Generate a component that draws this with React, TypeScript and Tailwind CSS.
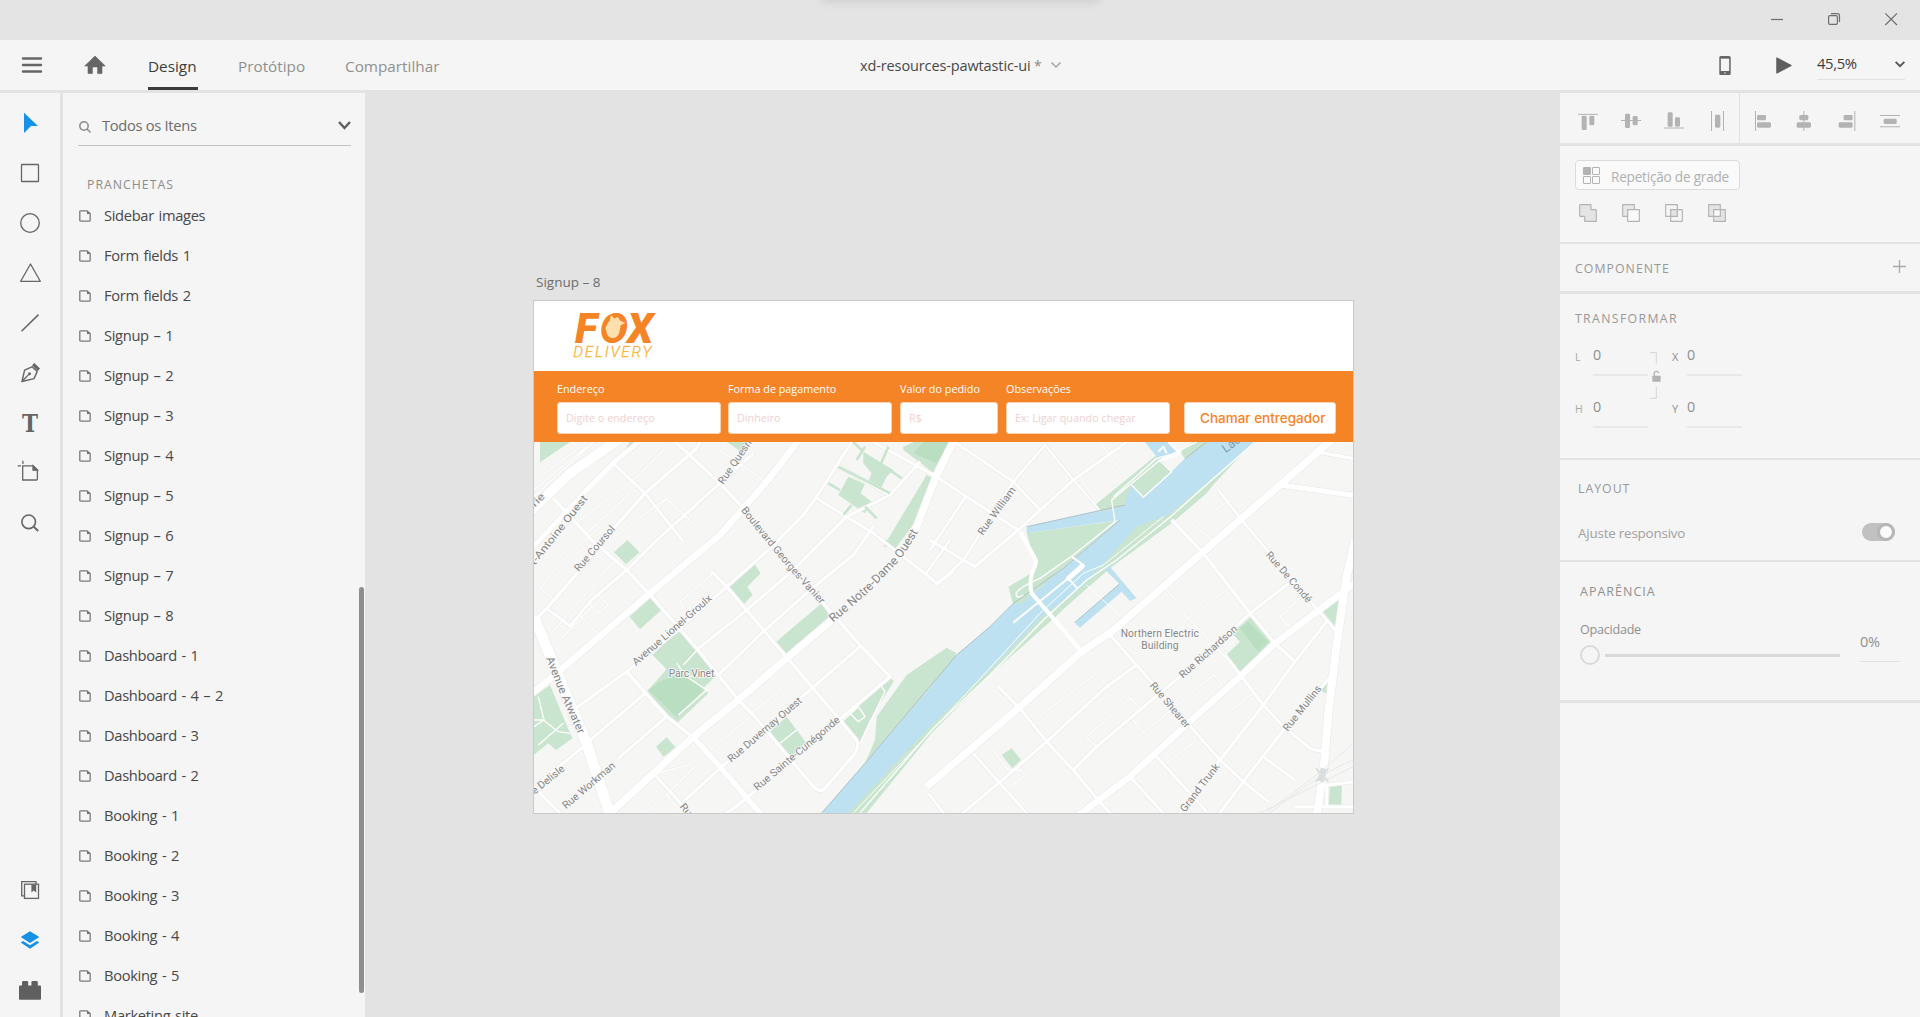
import React from "react";

const UI = "font-['Open_Sans','Noto_Sans',sans-serif]";

/* ---------- small helpers ---------- */

function Tool({ children }: { children: React.ReactNode }) {
  return (
    <svg viewBox="0 0 60 50" className="block h-[50px] w-[60px]" fill="none" stroke="#666" strokeWidth="1.3">
      {children}
    </svg>
  );
}

function Glyph({ children }: { children: React.ReactNode }) {
  return (
    <svg viewBox="0 0 60 60" className="block h-5 w-5" fill="#b3b3b3" stroke="none">
      {children}
    </svg>
  );
}

function PageIcon() {
  return (
    <svg viewBox="0 0 12 12" className="block h-3 w-3 shrink-0" fill="none" stroke="#7a7a7a" strokeWidth="1.3">
      <path d="M1.7 0.8H8.2L11.2 3.8V10.2A1 1 0 0 1 10.2 11.2H1.8A1 1 0 0 1 0.8 10.2V1.7A.9.9 0 0 1 1.7.8Z" />
      <path d="M8 .8V4H11.2Z" fill="#707070" stroke="none" />
    </svg>
  );
}

/* ---------- top bars ---------- */

function TitleBar() {
  return (
    <div className="relative h-10 shrink-0 overflow-hidden bg-[#e4e4e4]">
      <div className="absolute -top-5 left-[824px] h-5 w-[274px] shadow-[0_0_10px_2px_rgba(0,0,0,0.1)]" />
      <svg viewBox="0 0 160 40" className="ml-auto block h-10 w-[160px]" fill="none" stroke="#6e6e6e" strokeWidth="1.2">
        <path d="M11 19.5H23" />
        <rect x="68.6" y="15.6" width="8.8" height="8.8" rx="1.3" />
        <path d="M71 13.6H77.5A2 2 0 0 1 79.5 15.6V22" />
        <path d="M125.3 13.3L137 25M137 13.3L125.3 25" />
      </svg>
    </div>
  );
}

function Header() {
  return (
    <div className="flex h-[50px] shrink-0 bg-[#f5f5f5]">
      <svg viewBox="0 0 148 50" className="h-[50px] w-[148px] shrink-0">
        <path d="M23 18.5H41M23 25H41M23 31.5H41" stroke="#666" strokeWidth="2.4" strokeLinecap="round" />
        <path d="M95 16L105.3 26H102V33.6H97.6V27H92.4V33.6H88V26H84.7Z" fill="#666" stroke="#666" strokeWidth=".6" strokeLinejoin="round" />
      </svg>
      <div className="relative w-[49px] shrink-0 pt-[13px] text-[15.3px] leading-[26px] text-[#3c3c3c]">
        <span className="whitespace-nowrap">Design</span>
        <div className="absolute bottom-0 left-0 h-[3px] w-[50px] bg-[#3c3c3c]" />
      </div>
      <span className="ml-[41px] w-[107px] pt-[13px] text-[15.3px] leading-[26px] text-[#909090]">Protótipo</span>
      <span className="w-[515px] pt-[13px] text-[15.3px] leading-[26px] text-[#909090]">Compartilhar</span>
      <span className="w-[174px] whitespace-nowrap pt-[13px] text-[14.5px] leading-[26px] tracking-[-0.12px] text-[#484848]">xd-resources-pawtastic-ui</span>
      <span className="w-[17px] pt-[13px] text-[14px] leading-[26px] text-[#8a8a8a]">*</span>
      <svg viewBox="0 0 10 6" className="mt-[22px] h-1.5 w-2.5" fill="none" stroke="#ababab" strokeWidth="1.6">
        <path d="M.6.6L5 5L9.4.6" />
      </svg>
      <div className="grow" />
      <svg viewBox="0 0 12 20" className="mr-[45px] mt-[16px] h-[19px] w-3">
        <rect x="0" y="0" width="12" height="20" rx="1.6" fill="#666" />
        <rect x="1.6" y="2.8" width="8.8" height="13" fill="#f5f5f5" />
        <circle cx="6" cy="17.9" r=".8" fill="#f5f5f5" />
      </svg>
      <svg viewBox="0 0 16 17" className="mr-[25px] mt-[17px] h-[17px] w-4">
        <path d="M.8.8L15.4 8.5L.8 16.2Z" fill="#5f5f5f" stroke="#5f5f5f" strokeLinejoin="round" />
      </svg>
      <div className="mr-[15px] flex h-10 w-[88px] justify-between border-b border-[#e1e1e1]">
        <span className="pt-[10px] text-[14.8px] leading-[26px] tracking-[-0.35px] text-[#3c3c3c]">45,5%</span>
        <svg viewBox="0 0 10 7" className="mt-[21px] h-[7px] w-2.5" fill="none" stroke="#555" strokeWidth="1.9">
          <path d="M.6.8L5 5.2L9.4.8" />
        </svg>
      </div>
    </div>
  );
}

/* ---------- left side ---------- */

function Toolbar() {
  return (
    <div className="flex w-[60px] shrink-0 flex-col bg-[#f5f5f5] pb-[2px] pt-[5px]">
      <Tool><path d="M24 14.7L38 28H31L24 35Z" fill="#1592e6" stroke="none" /></Tool>
      <Tool><rect x="21.5" y="16.5" width="17" height="17" rx=".6" /></Tool>
      <Tool><circle cx="30" cy="25" r="9.3" /></Tool>
      <Tool><path d="M30.5 16L40.3 33.3H20.7Z" strokeLinejoin="round" /></Tool>
      <Tool><path d="M21.5 33.2L38.5 16.6" strokeWidth="1.5" /></Tool>
      <Tool>
        <path d="M22 33.5L24.6 22.2L32 18.8L37.2 23.6L34 30.6Z" strokeWidth="1.4" strokeLinejoin="round" />
        <path d="M22.4 33L28.8 26.4" />
        <circle cx="29.5" cy="25.7" r="1.5" fill="#666" stroke="none" />
        <path d="M32 17.2L34.3 15.1L40 20.6L37.8 23Z" fill="#666" stroke="none" />
      </Tool>
      <Tool>
        <text x="22" y="33.7" fontFamily="DejaVu Serif" fontWeight="700" fontSize="23.5" textLength="16" lengthAdjust="spacingAndGlyphs" fill="#666" stroke="none">T</text>
      </Tool>
      <Tool>
        <path d="M22.7 17.8H33.2L37.4 22V31A1 1 0 0 1 36.4 32H22.7Z" />
        <path d="M33 17.8V22.2H37.4Z" fill="#666" />
        <path d="M17.7 17.9H21M22.9 12.7V16" />
      </Tool>
      <Tool>
        <circle cx="28.7" cy="23.8" r="6.8" strokeWidth="1.6" />
        <path d="M33.6 28.6L38.2 33" strokeWidth="2" />
      </Tool>
      <div className="grow" />
      <Tool>
        <path d="M24.3 30.8H21.7V16.6H36V19" />
        <rect x="24.5" y="19.2" width="14" height="14.2" />
        <path d="M31.4 19.4H36.2V27.6L33.8 25.4L31.4 27.6Z" fill="#666" stroke="none" />
      </Tool>
      <Tool>
        <g fill="#1592e6" stroke="none">
          <path d="M30 16.2L39.3 22L30 28L20.7 22Z" />
          <path d="M20.7 27.6L23.2 26L30 30.2L36.8 26L39.3 27.6L30 33.8Z" />
        </g>
      </Tool>
      <Tool>
        <path d="M20 20.6H22V17.2Q22 16 23.2 16H27Q28.2 16 28.2 17.2V20.6H31.4V17.2Q31.4 16 32.6 16H36.6Q37.8 16 37.8 17.2V20.6H40Q41 20.6 41 21.6V33.8Q41 34.8 40 34.8H20Q19 34.8 19 33.8V21.6Q19 20.6 20 20.6Z" fill="#5f5f5f" stroke="none" />
      </Tool>
    </div>
  );
}

const BOARDS = [
  "Sidebar images", "Form fields 1", "Form fields 2", "Signup – 1", "Signup – 2", "Signup – 3", "Signup – 4",
  "Signup – 5", "Signup – 6", "Signup – 7", "Signup – 8", "Dashboard - 1", "Dashboard - 4 – 2", "Dashboard - 3",
  "Dashboard - 2", "Booking - 1", "Booking - 2", "Booking - 3", "Booking - 4", "Booking - 5", "Marketing site",
];

function LayersPanel() {
  return (
    <div className="relative ml-[3px] flex w-[302px] shrink-0 flex-col overflow-hidden bg-[#f5f5f5]">
      <div className="ml-[15px] mt-[14px] flex h-[39px] w-[273px] shrink-0 items-center border-b border-[#c3c3c3]">
        <svg viewBox="0 0 12 12" className="ml-px mt-[1px] h-3 w-3" fill="none" stroke="#8a8a8a" strokeWidth="1.5">
          <circle cx="5" cy="5" r="4.2" />
          <path d="M8 8L11.5 11.5" />
        </svg>
        <span className="ml-[11px] grow pb-[2px] text-[14.7px] leading-6 tracking-[-0.3px] text-[#6c6c6c]">Todos os Itens</span>
        <svg viewBox="0 0 13 9" className="mb-px h-[9px] w-[13px]" fill="none" stroke="#606060" strokeWidth="2.4">
          <path d="M1 1L6.5 7L12 1" />
        </svg>
      </div>
      <div className="ml-6 mt-[29px] shrink-0 text-[12.3px] leading-[20px] tracking-[1px] text-[#8c8c8c]">PRANCHETAS</div>
      <div className="mt-px shrink-0">
        {BOARDS.map((b) => (
          <div key={b} className="flex h-10 items-center pl-4">
            <PageIcon />
            <span className="ml-[13px] pb-[2px] text-[14.7px] leading-6 tracking-[-0.33px] text-[#484848] [word-spacing:1.2px]">{b}</span>
          </div>
        ))}
      </div>
      <div className="absolute left-[296px] top-[494px] h-[406px] w-[5px] rounded-full bg-[#8f8f8f]" />
    </div>
  );
}

/* ---------- artboard ---------- */

function Logo() {
  return (
    <svg viewBox="150 145 270 155" className="ml-9 block h-[51.67px] w-[90px]">
      <defs>
        <linearGradient id="dl" x1="0" y1="1" x2="0" y2="0">
          <stop offset="0" stopColor="#fdc82f" />
          <stop offset="1" stopColor="#f6a13a" />
        </linearGradient>
      </defs>
      <g fontFamily="Roboto" fontStyle="italic">
        <text x="165 239 322" y="246" fontWeight="900" fontSize="126" fill="#f58426">FOX</text>
        <path d="M262 190L270 178L273 163L283 174L293 168L301 180L316 187L302 194L298 215Q294 232 277 233Q262 231 259 212L256 202Z" fill="#fee0b0" />
        <text x="160" y="290" fontSize="46" fontWeight="300" fill="url(#dl)" stroke="#f9b233" strokeWidth=".8" textLength="234">DELIVERY</text>
      </g>
    </svg>
  );
}

function Field({ label, hint, box }: { label: string; hint: string; box: string }) {
  return (
    <div className={box}>
      <div className="h-[21px] whitespace-nowrap text-[10.8px] leading-[15px] text-white">{label}</div>
      <div className="flex h-8 items-center rounded-[3px] border border-[#f7d3b4] bg-white pl-2 text-[10.8px] text-[#efd0d0]">{hint}</div>
    </div>
  );
}

/* Parks and lawns of the street map */
const PARKS = [
  "M60 546H150L60 607Z", "M285 615L330 546H362L350 560Z", "M620 546H695L660 572Z",
  "M1150 560L1180 546H1300L1245 642L1150 570Z",
  "M1030 575L1120 630L1100 650L1080 690L1045 665L1055 640L1030 610Z",
  "M985 650L1035 672L1022 700L1055 725L1035 760L955 705Z",
  "M1220 645L1240 655L1190 780L1130 860H1090Z",
  "M329 1070L390 1015L424 1050L360 1108Z",
  "M398 1185L475 1110L590 1245L550 1285L565 1300L470 1390L380 1295L440 1228Z",
  "M625 980L705 914L722 940L682 980L698 1005L672 1032Z",
  "M765 1148L905 1030L930 1070L800 1185Z",
  "M42 1310L90 1275L150 1420L158 1435L108 1470L85 1450L42 1484Z",
  "M408 1460L440 1432L467 1462L430 1490Z", "M750 1415L800 1370L860 1450L810 1490Z",
  "M960 1380L1110 1255L1122 1262L1050 1380L1015 1455Z",
  "M1035 1510L1065 1440L1070 1370L1160 1245L1280 1163L1310 1180L1290 1215Z",
  "M2113 1190L2160 1145L2135 1120L2195 1068L2260 1145L2158 1237Z",
  "M2405 1050L2465 1000L2450 1105Z", "M2400 1290L2432 1245L2425 1305Z", "M2430 1580L2466 1577L2464 1635L2426 1635Z",
  "M1090 840H1140L1125 868L1098 850Z",
];

const CANAL_PARKS = [
  "M1728 733L1910 585L1955 635L1870 712L1835 675L1810 740L1745 755Z",
  "M1980 575L2020 546H2066L1995 596Z",
  "M1520 820L1735 790L1795 782L1500 1035L1475 1005L1550 920Z",
  "M1465 980L1550 930L1600 925L1520 1010L1480 1035Z",
];

const ROADS: [number, string][] = [
  [30, "M30 755L150 640L300 535"],
  [14, "M40 860L200 690L290 600L370 535"],
  [20, "M30 1305L110 1240L390 1000L600 825L740 665L840 535"],
  [22, "M275 1655L520 1430L655 1320L800 1195L930 1085L1050 980L1130 900L1190 800L1250 645L1305 535"],
  [32, "M42 1070L110 1235L200 1450L272 1670"],
  [10, "M100 715L215 840L320 930L400 1015L530 1165L655 1320L700 1365L880 1580Q900 1600 915 1585L1005 1480Q1018 1460 1010 1440L880 1285L730 1110L620 980L575 935"],
  [9, "M285 615L375 700L490 845"],
  [10, "M465 545L600 670L665 740L910 1030L1020 1155L1110 1250L680 1615L620 1660"],
  [11, "M320 1235L440 1370L520 1432"], [17, "M520 1432L600 1520L725 1665"],
  [9, "M150 1357L320 1235L480 1105L745 870L850 765L890 710L960 600L1000 540"],
  [9, "M205 1445L375 1300"], [9, "M535 1165L675 1055L820 930L980 770L1110 705L1200 605"],
  [9, "M295 1495L440 1370"], [9, "M595 1245L730 1115L870 990L1000 885L1060 800"],
  [9, "M490 1625L600 1525L870 1290L1020 1160"],
  [9, "M50 1575L190 1460"], [9, "M55 1595L130 1670"], [9, "M400 1540L510 1660"],
  [10, "M45 1080L85 1040L180 930L250 840L375 700L530 565L545 535"],
  [9, "M80 1045L150 1098L215 1020L320 930L400 850L560 705L600 670L700 580"],
  [9, "M890 715L1060 820L1220 945L1250 970L1300 935"],
  [9, "M950 615L1110 705"], [9, "M1060 546L1250 650L1340 710L1495 810"],
  [8, "M1310 550L1480 665L1560 750"], [8, "M1575 555L1480 665L1330 900L1250 975"],
  [9, "M1820 546L1660 660L1495 810L1365 920L1330 900L1230 840"],
  [8, "M1215 945L1290 840"], [8, "M1340 705L1230 870"], [7, "M1575 555L1665 665L1740 750"],
  [22, "M1220 1580L1500 1340L1685 1175L1775 1115L2050 875L2280 675L2440 535"],
  [20, "M1670 1670L1830 1550L2020 1375L2155 1255L2265 1150L2510 965"],
  [15, "M2280 675L2510 707"], [10, "M2385 575L2510 597"],
  [9, "M1435 1280L1500 1345L1580 1445L1660 1530L1730 1615L1780 1670"],
  [8, "M1360 1480L1435 1565L1525 1665"], [9, "M1770 1125L1850 1215L2020 1410L2100 1500L2170 1565L2245 1625"],
  [10, "M1955 780L2050 880L2190 1060L2260 1145L2325 1205"],
  [8, "M2095 690L2165 780L2380 1035L2450 1115"],
  [9, "M2115 1185L2230 1335L2290 1400L2370 1465L2405 1475"],
  [9, "M1910 1490L2060 1655"], [9, "M1830 1550L1935 1665"], [8, "M1225 1600L1275 1665"],
  [9, "M1315 1670L1435 1570L1580 1445L1760 1280L1850 1215"],
  [9, "M1660 1530L1730 1460L1860 1350L1980 1250L2190 1060L2320 960"],
  [9, "M2420 1085L2325 1205L2230 1335L2100 1500L1970 1670"],
  [9, "M2095 1665L2170 1565L2290 1410L2445 1235"],
  [9, "M2230 1490L2325 1560"], [9, "M2325 1640H2510"], [9, "M2420 1640V1575L2510 1565"],
  [24, "M2390 1670L2412 1515L2425 1360L2448 1170L2478 960L2505 840"],
];

const LANES = [
  "M42 690L200 560M42 710L220 546M60 650L180 560", "M100 840L340 660L440 560", "M240 860L440 715L530 800M400 760L440 715",
  "M200 820L330 700M600 570L735 665", "M60 985L130 900L240 800M60 985L95 1015M85 1130L250 940L320 870",
  "M205 1030L235 1060L265 1035L235 1005ZM125 1135L215 1040M180 1065L235 1125",
  "M480 1025L580 940M480 1025L495 1060M750 1245L780 1290L695 1360", "M570 1470L690 1370M410 1540L520 1510M440 1605L530 1515M380 1655L440 1605L480 1655",
  "M1545 1380L1730 1240L1770 1285M1700 1430L1830 1315L1865 1350M1730 1460L1700 1430M1840 1380L1870 1420L2080 1245L2110 1275",
  "M1400 1445L1465 1530L1505 1530L1515 1545L1475 1578", "M1940 1510L2030 1440M2115 1365L2200 1300M2280 1070L2350 1005M2280 1070L2310 1100",
  "M2010 1070L2125 985M1990 1060L2115 1190M1930 980L1985 1040", "M1610 546L1735 735M1740 546L1840 680",
  "M2085 750L2130 720M2015 790L2090 850",
];

const LABEL: React.CSSProperties = { paintOrder: "stroke" };

function Street({ x, y, x2, y2, children }: { x: number; y: number; x2: number; y2: number; children: string }) {
  const len = Math.hypot(x2 - x, y2 - y);
  const deg = (Math.atan2(y2 - y, x2 - x) * 180) / Math.PI;
  return (
    <text transform={`translate(${x} ${y}) rotate(${deg})`} textLength={len} lengthAdjust="spacingAndGlyphs" style={LABEL}>
      {children}
    </text>
  );
}

function CityMap() {
  return (
    <svg viewBox="42 546 2457 1113" className="block h-[371px] w-[819px]">
      <rect x="42" y="546" width="2457" height="1113" fill="#f6f6f5" />
      <g fill="#cae5cf">
        {PARKS.map((d) => <path key={d} d={d} />)}
        <path d="M2200 546L2082 672L2060 700L1960 785L1770 925L1650 1030L1590 1085L1410 1245L1235 1420L1040 1659H980L1235 1380L1500 1130L1700 900L1850 780L2060 660L2180 546Z" />
      </g>
      <path d="M1180 580L1210 546H1290L1250 610Z" fill="#b9dec2" />
      <path d="M385 1290Q480 1210 550 1290L470 1370Z" fill="#b9dec2" />
      <path d="M2160 1105L2185 1085L2245 1145L2215 1175Z" fill="#b9dec2" />
      <g fill="none" strokeLinejoin="round" stroke="#ebebea">
        {ROADS.map(([w, d]) => <path key={d} d={d} strokeWidth={w + 4} />)}
        {LANES.map((d) => <path key={d} d={d} strokeWidth="6" />)}
      </g>
      <g fill="none" strokeLinejoin="round" stroke="#fff">
        {LANES.map((d) => <path key={d} d={d} strokeWidth="4" />)}
        {ROADS.map(([w, d]) => <path key={d} d={d} strokeWidth={w} />)}
      </g>
      <path d="M1445 1485L1475 1465L1503 1499L1477 1525Z" fill="#cae5cf" />
      <path d="M282 877L322 840L358 877L318 913Z" fill="#cae5cf" />

      {/* Lachine canal and its basins */}
      <path d="M2060 546L1995 595L1955 635L1870 710L1835 675L1775 720L1815 735L1520 800V820L1730 790L1800 780L1630 925L1510 1020L1480 1030L1410 1100L1310 1185L1230 1285L1035 1510L905 1659H985L1235 1395L1410 1230L1570 1065L1680 985L1770 890L1850 800L1945 765L2070 660L2210 546Z" fill="#bee1f1" />
      <path d="M1875 546H1945L1985 580L1920 603Z" fill="#bee1f1" />
      <path d="M1765 915L1850 1015L1830 1023L1805 995L1680 1103L1664 1088L1798 972L1748 922Z" fill="#bee1f1" />
      <g fill="#cae5cf">{CANAL_PARKS.map((d) => <path key={d} d={d} />)}</g>
      <path d="M1995 596L2060 546M1520 800L1815 735M1800 780L1630 925L1480 1030L1410 1100L1310 1185L1035 1510L905 1659M1664 1088L1798 972" fill="none" stroke="#a5b9c0" strokeWidth="2.5" />
      <g fill="none" stroke="#fff" strokeWidth="4" strokeLinejoin="round">
        <path d="M1020 1659L1240 1405L1410 1245L1570 1080L1700 960L1790 900L1950 772L2075 660L2205 546" />
        <path d="M1000 1659L1235 1412L1400 1235L1560 1060L1690 940L1750 915L1930 770" strokeWidth="3" />
        <path d="M1510 1005Q1490 1020 1488 1000Q1500 980 1560 955L1660 885L1785 785L1775 720L1920 600L2030 546" />
        <path d="M1780 710L1910 595L1985 575M1920 603L1955 635L1870 712L1835 675" />
        <path d="M1690 915L1655 890M1645 955L1480 1088M1645 955L1672 985M1940 580L1930 560L1915 575" strokeWidth="6" />
        <path d="M1645 955L1687 918" strokeWidth="15" strokeLinecap="round" />
        <path d="M1945 546L1980 580L1915 603" strokeWidth="7" />
        <path d="M1500 815L1545 895Q1552 905 1542 925Q1525 960 1535 1000L1600 1075L1685 1175" strokeWidth="12" />
        <path d="M1700 975L1800 1067" strokeWidth="3" />
        <path d="M470 1210L500 1250L560 1290L475 1365M490 1215L530 1172M500 1250L590 1240M42 1380L70 1380L115 1415L150 1420M55 1310L72 1380L42 1400" />
        <path d="M1085 1280L1095 1295L1020 1450M960 1390L1015 1340L1035 1370L1015 1385L990 1360M780 1450L830 1410M55 1455L130 1390" />
        <path d="M955 620L1110 700M1010 600L1035 560M1000 546L1030 575M1070 640L1105 560M1110 630L1145 655M970 765L995 735M1035 740L1070 775M925 670L960 690" stroke="#cae5cf" strokeWidth="8" />
      </g>
      <g fill="none" stroke="#e3e7e7" strokeWidth="2.5">
        <path d="M2240 1655Q2380 1560 2499 1450M2250 1659Q2400 1540 2499 1500M2220 1659Q2400 1570 2499 1520" />
        <path d="M2412 1525L2402 1565" stroke="#d9dfdf" strokeWidth="20" />
        <path d="M2388 1525L2425 1565M2425 1525L2388 1565" stroke="#d9dfdf" strokeWidth="6" />
      </g>

      <defs>
        <path id="vanier" d="M662 751L740 848L800 920L902 1034L960 1100" />
        <path id="dame" d="M940 1088L1050 993L1130 910Q1160 880 1240 735" />
        <path id="atwater" d="M78 1195L120 1300L178 1430L200 1480" />
      </defs>
      <g fontFamily="Roboto" fontSize="31" fill="#858585" stroke="#fafafa" strokeWidth="5" strokeLinejoin="round">
        <text style={LABEL}><textPath href="#vanier" textLength="370" lengthAdjust="spacingAndGlyphs">Boulevard Georges-Vanier</textPath></text>
        <text style={LABEL} fontSize="36"><textPath href="#dame" textLength="375" lengthAdjust="spacingAndGlyphs">Rue Notre-Dame Ouest</textPath></text>
        <text style={LABEL} fontSize="33"><textPath href="#atwater" textLength="248" lengthAdjust="spacingAndGlyphs">Avenue Atwater</textPath></text>
        <Street x={610} y={675} x2={696} y2={548}>Rue Quesn</Street>
        <Street x={45} y={742} x2={76} y2={712}>rie</Street>
        <Street x={44} y={917} x2={204} y2={716}>t-Antoine Ouest</Street>
        <Street x={176} y={937} x2={287} y2={808}>Rue Coursol</Street>
        <Street x={348} y={1218} x2={578} y2={1018}>Avenue Lionel-Groulx</Street>
        <Street x={634} y={1508} x2={848} y2={1325}>Rue Duvernay Ouest</Street>
        <Street x={712} y={1593} x2={962} y2={1383}>Rue Sainte-Cunégonde</Street>
        <Street x={138} y={1648} x2={288} y2={1520}>Rue Workman</Street>
        <Street x={44} y={1604} x2={136} y2={1530}>e Delisle</Street>
        <Street x={478} y={1640} x2={502} y2={1670}>Ru</Street>
        <Street x={1388} y={828} x2={1488} y2={690}>Rue William</Street>
        <g fill="#7e9cab" stroke="#bee1f1" fontSize="36"><Street x={2117} y={580} x2={2180} y2={532}>Lach</Street></g>
        <Street x={2236} y={886} x2={2362} y2={1030}>Rue De Condé</Street>
        <Street x={1989} y={1256} x2={2154} y2={1110}>Rue Richardson</Street>
        <Street x={1888} y={1277} x2={1997} y2={1406}>Rue Shearer</Street>
        <Street x={2303} y={1416} x2={2406} y2={1286}>Rue Mullins</Street>
        <Street x={1995} y={1658} x2={2100} y2={1520}>Grand Trunk</Street>
        <text x="446" y="1251" textLength="137" style={LABEL}>Parc Vinet</text>
        <text x="1802" y="1132" textLength="235" style={LABEL}>Northern Electric</text>
        <text x="1864" y="1167" textLength="112" style={LABEL}>Building</text>
      </g>
    </svg>
  );
}

function Canvas() {
  return (
    <div className="flex grow flex-col items-start pl-[168px] pt-[178px]">
      <div className="ml-[3px] h-[29px] text-[13.5px] leading-[22px] text-[#6c6c6c]">Signup – 8</div>
      <div className="w-[821px] border border-[#c9c9c9] bg-white">
        <div className="h-[70px] pt-2"><Logo /></div>
        <div className="flex h-[71px] bg-[#f58426] pl-[23px] pt-[10px]">
          <Field label="Endereço" hint="Digite o endereço" box="w-[164px]" />
          <Field label="Forma de pagamento" hint="Dinheiro" box="ml-[7px] w-[164px]" />
          <Field label="Valor do pedido" hint="R$" box="ml-2 w-[98px]" />
          <Field label="Observações" hint="Ex: Ligar quando chegar" box="ml-2 w-[164px]" />
          <div className="ml-[14px] mt-[21px] flex h-8 w-[152px] items-center whitespace-nowrap rounded-[3px] border border-[#f7d3b4] bg-white pl-[15px] font-['Inter',sans-serif] text-[13.5px] font-medium text-[#f58426]">
            Chamar entregador
          </div>
        </div>
        <CityMap />
      </div>
    </div>
  );
}

/* ---------- right side ---------- */

function AlignRow() {
  return (
    <div className="flex h-[50px] bg-[#f5f5f5]">
      <div className="flex w-[180px] items-start border-r border-[#e1e1e1] pl-[18px] pt-[18px]">
        <div className="w-[43px]"><Glyph><path d="M0 8.5H60V11.5H0Z" /><rect x="11" y="14" width="15" height="43" rx="4" /><rect x="34" y="14" width="15" height="29" rx="4" /></Glyph></div>
        <div className="w-[43px]"><Glyph><path d="M0 27H60V30H0Z" /><rect x="12" y="8" width="15" height="43" rx="4" /><rect x="35" y="15" width="15" height="28" rx="4" /></Glyph></div>
        <div className="w-[43px]"><Glyph><path d="M0 49.5H60V52.5H0Z" /><rect x="11" y="4" width="15" height="43" rx="4" /><rect x="33" y="19" width="15" height="28" rx="4" /></Glyph></div>
        <Glyph><path d="M12 0H15V60H12ZM48 0H51V60H48Z" /><rect x="24" y="11" width="16" height="39" rx="4" /></Glyph>
      </div>
      <div className="flex items-start pl-[13px] pt-[18px]">
        <div className="w-[41px]"><Glyph><path d="M6 0H9V60H6Z" /><rect x="12" y="12" width="27" height="16" rx="4" /><rect x="12" y="34" width="42" height="16" rx="4" /></Glyph></div>
        <div className="w-[43px]"><Glyph><path d="M28 0H31V60H28Z" /><rect x="16" y="12" width="27" height="16" rx="4" /><rect x="8" y="34" width="43" height="16" rx="4" /></Glyph></div>
        <div className="w-[43px]"><Glyph><path d="M52 0H55V60H52Z" /><rect x="20" y="12" width="27" height="16" rx="4" /><rect x="5" y="34" width="42" height="16" rx="4" /></Glyph></div>
        <Glyph><path d="M0 12H60V15H0ZM0 46H60V49H0Z" /><rect x="11" y="23" width="39" height="16" rx="4" /></Glyph>
      </div>
    </div>
  );
}

function Bool({ children }: { children: React.ReactNode }) {
  return (
    <svg viewBox="0 0 54 54" className="mr-[25px] h-[18px] w-[18px]" fill="none" stroke="#b3b3b3" strokeWidth="3.4" strokeLinejoin="round">
      {children}
    </svg>
  );
}

function Num({ name, lead }: { name: string; lead: string }) {
  return (
    <div className="flex h-[52px]">
      <span className={lead}>{name}</span>
      <div className="h-[29px] w-[55px] border-b-2 border-[#e8e8e8] text-[14.3px] leading-[16px] text-[#8f8f8f]">
        <span>0</span>
      </div>
    </div>
  );
}

function Inspector() {
  const head = "text-[12.3px] leading-[20px] text-[#989898]";
  return (
    <div className="flex w-[360px] shrink-0 flex-col bg-[#e3e3e3]">
      <AlignRow />
      <div className="mt-[3px] h-24 bg-[#f5f5f5] pl-[15px] pt-[14px]">
        <div className="flex h-[30px] w-[165px] items-center rounded-[4px] border border-[#dcdcdc] bg-[#fafafa] pl-[7px]">
          <svg viewBox="0 0 51 51" className="h-[17px] w-[17px]" fill="none" stroke="#b3b3b3" strokeWidth="3">
            <rect x="1.5" y="1.5" width="21" height="21" fill="#b3b3b3" rx="1" />
            <rect x="28.5" y="1.5" width="21" height="21" rx="1" />
            <rect x="1.5" y="28.5" width="21" height="21" rx="1" />
            <rect x="28.5" y="28.5" width="21" height="21" rx="1" />
          </svg>
          <span className="ml-[11px] whitespace-nowrap pt-[3px] text-[13.6px] leading-5 tracking-[-0.22px] text-[#b0b0b0]">Repetição de grade</span>
        </div>
        <div className="ml-1 mt-[14px] flex">
          <Bool><path d="M4 2H36V17H50Q52 17 52 19V52H17V37H4Q2 37 2 35V4Q2 2 4 2Z" fill="#e4e4e4" /></Bool>
          <Bool><path d="M2 2H37V17H17V37H2Z" fill="#e8e8e8" /><path d="M17 17H52V52H17Z" fill="#f9f9f9" /></Bool>
          <Bool><path d="M2 2H37V37H2ZM17 17H52V52H17Z" /><path d="M17 17H37V37H17Z" fill="#e4e4e4" /></Bool>
          <Bool><path d="M2 2H37V37H2ZM17 17H52V52H17Z" fill="#e4e4e4" /><path d="M17 17H37V37H17Z" fill="#f9f9f9" /></Bool>
        </div>
      </div>
      <div className="mt-[2px] flex h-[47px] justify-between bg-[#f5f5f5] pl-[15px] pr-[14px]">
        <span className={`${head} pt-[15px] tracking-[1.05px]`}>COMPONENTE</span>
        <svg viewBox="0 0 13 13" className="mt-4 h-[13px] w-[13px]" stroke="#aaa" strokeWidth="1.3"><path d="M6.5 0V13M0 6.5H13" /></svg>
      </div>
      <div className="mt-[3px] h-[164px] bg-[#f5f5f5] pl-[15px] pt-[15px]">
        <div className={`${head} tracking-[1.35px]`}>TRANSFORMAR</div>
        <div className="mt-[18px] flex">
          <div>
            <Num name="L" lead="w-[18px] text-[10.5px] leading-[20px] text-[#a8a8a8]" />
            <Num name="H" lead="w-[18px] text-[10.5px] leading-[20px] text-[#a8a8a8]" />
          </div>
          <svg viewBox="0 0 36 150" className="ml-0.5 mt-1 h-[50px] w-3" fill="none" stroke="#d6d6d6" strokeWidth="3">
            <path d="M0 5H19V38M0 142H19V108" />
            <rect x="7" y="74" width="25" height="18" rx="2" fill="#b3b3b3" stroke="none" />
            <path d="M13 76V66Q13 61 19 61Q25 61 26 66" stroke="#b3b3b3" strokeWidth="4" />
          </svg>
          <div className="ml-[10px]">
            <Num name="X" lead="w-[15px] text-[11px] leading-[20px] text-[#8f8f8f]" />
            <Num name="Y" lead="w-[15px] text-[11px] leading-[20px] text-[#8f8f8f]" />
          </div>
        </div>
      </div>
      <div className="mt-[2px] h-[100px] bg-[#f5f5f5] pl-[18px] pr-[25px] pt-[19px]">
        <div className={`${head} tracking-[1px]`}>LAYOUT</div>
        <div className="mt-[23px] flex items-center justify-between">
          <span className="text-[13.4px] leading-[22px] tracking-[-0.2px] text-[#a0a0a0]">Ajuste responsivo</span>
          <div className="-mt-[3px] flex h-[18px] w-[33px] justify-end rounded-full bg-[#c1c1c1]">
            <div className="h-[18px] w-[18px] rounded-full border-[3px] border-[#b6b6b6] bg-[#fafafa]" />
          </div>
        </div>
      </div>
      <div className="mt-[2px] flex h-[138px] justify-between bg-[#f5f5f5] pl-5 pr-5">
        <div className="pt-[20px]">
          <div className="text-[12.5px] leading-[20px] tracking-[1px] text-[#909090]">APARÊNCIA</div>
          <div className="mt-[17px] text-[12.6px] leading-[22px] tracking-[-0.25px] text-[#909090]">Opacidade</div>
          <div className="mt-1 flex items-center">
            <div className="h-5 w-5 rounded-full border-2 border-[#dadada]" />
            <div className="ml-[5px] h-[3px] w-[235px] bg-[#dadada]" />
          </div>
        </div>
        <div className="mt-[67px] h-[33px] w-10 border-b border-[#e0e0e0] pt-px text-[14.5px] leading-6 tracking-[-0.4px] text-[#909090]">0%</div>
      </div>
      <div className="mt-[3px] grow bg-[#f5f5f5]" />
    </div>
  );
}

export default function App() {
  return (
    <div className={`${UI} flex h-[1017px] w-[1920px] flex-col overflow-hidden bg-[#e3e3e3]`}>
      <TitleBar />
      <Header />
      <div className="mt-[3px] flex h-[924px] shrink-0">
        <Toolbar />
        <LayersPanel />
        <Canvas />
        <Inspector />
      </div>
    </div>
  );
}
